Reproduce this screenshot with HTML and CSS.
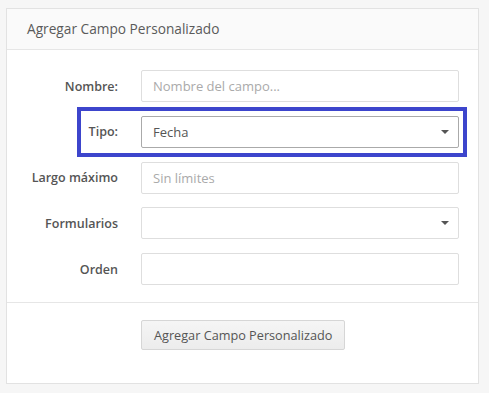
FILE: index.html
```html
<!DOCTYPE html>
<html lang="es">
<head>
	<meta charset="UTF-8">
	<title>Agregar Campo Personalizado</title>
	<link rel="stylesheet" href="styles.css">
</head>
<body>
	<div class="panel">
		<div class="panel-heading">Agregar Campo Personalizado</div>
		<div class="panel-body">
			<div class="form-row">
				<label class="form-label">Nombre:</label>
				<input class="form-control" type="text" placeholder="Nombre del campo...">
			</div>
			<div class="form-row form-row-marked">
				<label class="form-label">Tipo:</label>
				<div class="select select-active">Fecha<span class="caret"></span></div>
			</div>
			<div class="form-row">
				<label class="form-label">Largo máximo</label>
				<input class="form-control" type="text" placeholder="Sin límites">
			</div>
			<div class="form-row">
				<label class="form-label">Formularios</label>
				<div class="select"><span class="caret"></span></div>
			</div>
			<div class="form-row">
				<label class="form-label">Orden</label>
				<input class="form-control" type="text">
			</div>
		</div>
		<div class="panel-footer">
			<button class="btn" type="button">Agregar Campo Personalizado</button>
		</div>
	</div>
</body>
</html>
```

FILE: styles.css
```css
	body{
		margin:0;
		padding:8px 10px 8px 6px;
		background:#f6f6f6;
		font-family:"Open Sans","Liberation Sans",sans-serif;
		color:#555;
	}
	.panel{
		background:#fff;
		border:1px solid #e2e2e2;
		height:376px;
		box-sizing:border-box;
	}
	.panel-heading{
		background:#fafafa;
		border-bottom:1px solid #e6e6e6;
		padding:0 20px;
		height:40px;
		line-height:40px;
		font-size:13.7px;
		color:#5a5a5a;
	}
	.panel-body{
		padding:20px 19px 3px 0;
	}
	.form-row{
		display:grid;
		grid-template-columns:111px 318px;
		column-gap:23px;
		align-items:center;
		margin-bottom:13.75px;
	}
	.form-row-marked{
		position:relative;
	}
	.form-row-marked::after{
		content:"";
		position:absolute;
		left:70px;
		right:-8px;
		top:-9px;
		bottom:-9px;
		border:4px solid #3d45cc;
	}
	.form-label{
		text-align:right;
		font-size:12.5px;
		font-weight:600;
		color:#555;
	}
	.form-control,
	.select{
		box-sizing:border-box;
		height:32px;
		border:1px solid #dedede;
		border-radius:2px;
		padding:0 11px;
		font-family:inherit;
		font-size:13px;
		color:#555;
		background:#fff;
		outline:none;
	}
	.form-control::placeholder{
		color:#aaa;
	}
	.select{
		position:relative;
		line-height:30px;
	}
	.select-active{
		border-color:#aaa;
	}
	.caret{
		position:absolute;
		right:9px;
		top:13px;
		width:0;
		height:0;
		border-left:4px solid transparent;
		border-right:4px solid transparent;
		border-top:4px solid #555;
	}
	.panel-footer{
		border-top:1px solid #e6e6e6;
		padding:17px 0 0 134px;
	}
	.btn{
		height:30px;
		padding:0 12px;
		font-family:inherit;
		font-size:12.7px;
		color:#555;
		background:linear-gradient(#f5f5f5,#ececec);
		border:1px solid #d6d6d6;
		border-radius:2px;
	}
```
